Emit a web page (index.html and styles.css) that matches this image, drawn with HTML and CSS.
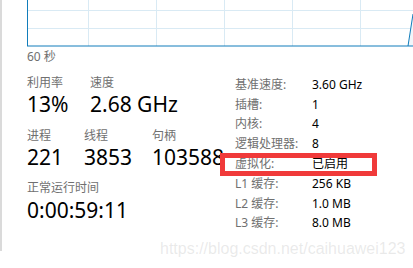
FILE: index.html
```html
<!DOCTYPE html>
<html lang="zh-CN">
<head>
    <meta charset="UTF-8">
    <meta name="viewport" content="width=device-width, initial-scale=1.0">
    <title>CPU</title>
    <link rel="stylesheet" href="styles.css">
</head>
<body>

    <div class="panel">
        <div class="chart">
            <svg width="386" height="47" viewBox="0 0 386 47">
                <g stroke="#d9eaf4" stroke-width="1">
                    <line x1="0" y1="10.5" x2="386" y2="10.5"/>
                    <line x1="0" y1="28.5" x2="386" y2="28.5"/>
                    <line x1="61.5" y1="0" x2="61.5" y2="46"/>
                    <line x1="129.5" y1="0" x2="129.5" y2="46"/>
                    <line x1="197.5" y1="0" x2="197.5" y2="46"/>
                    <line x1="265.5" y1="0" x2="265.5" y2="46"/>
                    <line x1="333.5" y1="0" x2="333.5" y2="46"/>
                </g>
                <polygon points="381,46 386,14 386,46" fill="#f1f6fa"/>
                <polyline points="381,46 386,14" fill="none" stroke="#117dbb" stroke-width="1"/>
                <line x1="0.5" y1="0" x2="0.5" y2="46" stroke="#117dbb"/>
                <line x1="0" y1="46" x2="386" y2="46" stroke="#117dbb"/>
            </svg>
        </div>
        <div class="axis">60 秒</div>

        <div class="details">
            <div class="stats">
                <div class="stat-row">
                    <div class="stat w-63">
                        <div class="label">利用率</div>
                        <div class="value">13%</div>
                    </div>
                    <div class="stat">
                        <div class="label">速度</div>
                        <div class="value">2.68 GHz</div>
                    </div>
                </div>
                <div class="stat-row">
                    <div class="stat w-57">
                        <div class="label">进程</div>
                        <div class="value">221</div>
                    </div>
                    <div class="stat w-68">
                        <div class="label">线程</div>
                        <div class="value">3853</div>
                    </div>
                    <div class="stat">
                        <div class="label">句柄</div>
                        <div class="value">103588</div>
                    </div>
                </div>
                <div class="stat-row">
                    <div class="stat">
                        <div class="label">正常运行时间</div>
                        <div class="value">0:00:59:11</div>
                    </div>
                </div>
            </div>

            <div class="specs">
                <div class="spec-label">基准速度:</div><div class="spec-value">3.60 GHz</div>
                <div class="spec-label">插槽:</div><div class="spec-value">1</div>
                <div class="spec-label">内核:</div><div class="spec-value">4</div>
                <div class="spec-label">逻辑处理器:</div><div class="spec-value">8</div>
                <div class="spec-label">虚拟化:</div><div class="spec-value">已启用</div>
                <div class="spec-label">L1 缓存:</div><div class="spec-value">256 KB</div>
                <div class="spec-label">L2 缓存:</div><div class="spec-value">1.0 MB</div>
                <div class="spec-label">L3 缓存:</div><div class="spec-value">8.0 MB</div>
            </div>
        </div>
    </div>

    <div class="highlight"></div>
    <div class="watermark">https://blog.csdn.net/caihuawei123</div>

</body>
</html>
```

FILE: styles.css
```css
body {
    margin: 0;
    width: 413px;
    height: 268px;
    overflow: hidden;
    position: relative;
    background: #fff;
    font-family: "Noto Sans", "Noto Sans CJK SC", sans-serif;
    color: #000;
}
.panel {
    height: 251px;
    border-left: 2px solid #dadada;
    padding-left: 25px;
    box-sizing: border-box;
}
.chart {
    height: 47px;
    overflow: hidden;
}
.chart svg {
    display: block;
}
.axis {
    margin-top: 2px;
    font-size: 12px;
    line-height: 16px;
    color: #707070;
}
.details {
    display: grid;
    grid-template-columns: 208px auto;
    margin-top: 10px;
}
.stat-row {
    display: flex;
    margin-bottom: 10px;
}
.stat-row:first-child {
    margin-bottom: 10.5px;
}
.stat {
    display: flex;
    flex-direction: column;
}
.w-63 { width: 63px; }
.w-57 { width: 57px; }
.w-68 { width: 68px; }
.label {
    font-size: 12px;
    line-height: 16px;
    color: #707070;
}
.value {
    font-size: 21px;
    line-height: 26px;
    white-space: nowrap;
}
.stat-row:last-child .value {
    margin-top: 1px;
}
.specs {
    display: grid;
    grid-template-columns: 77px auto;
    grid-auto-rows: 19.8px;
    align-items: center;
    font-size: 12px;
    line-height: 16px;
}
.spec-label {
    color: #707070;
}
.highlight {
    position: absolute;
    left: 220px;
    top: 153px;
    width: 157px;
    height: 23px;
    border: 5px solid #f03a3a;
    box-sizing: border-box;
}
.watermark {
    position: absolute;
    left: 160px;
    top: 240px;
    font-family: "Liberation Sans", Arial, sans-serif;
    font-size: 16px;
    color: rgba(170, 170, 170, 0.25);
}
```
